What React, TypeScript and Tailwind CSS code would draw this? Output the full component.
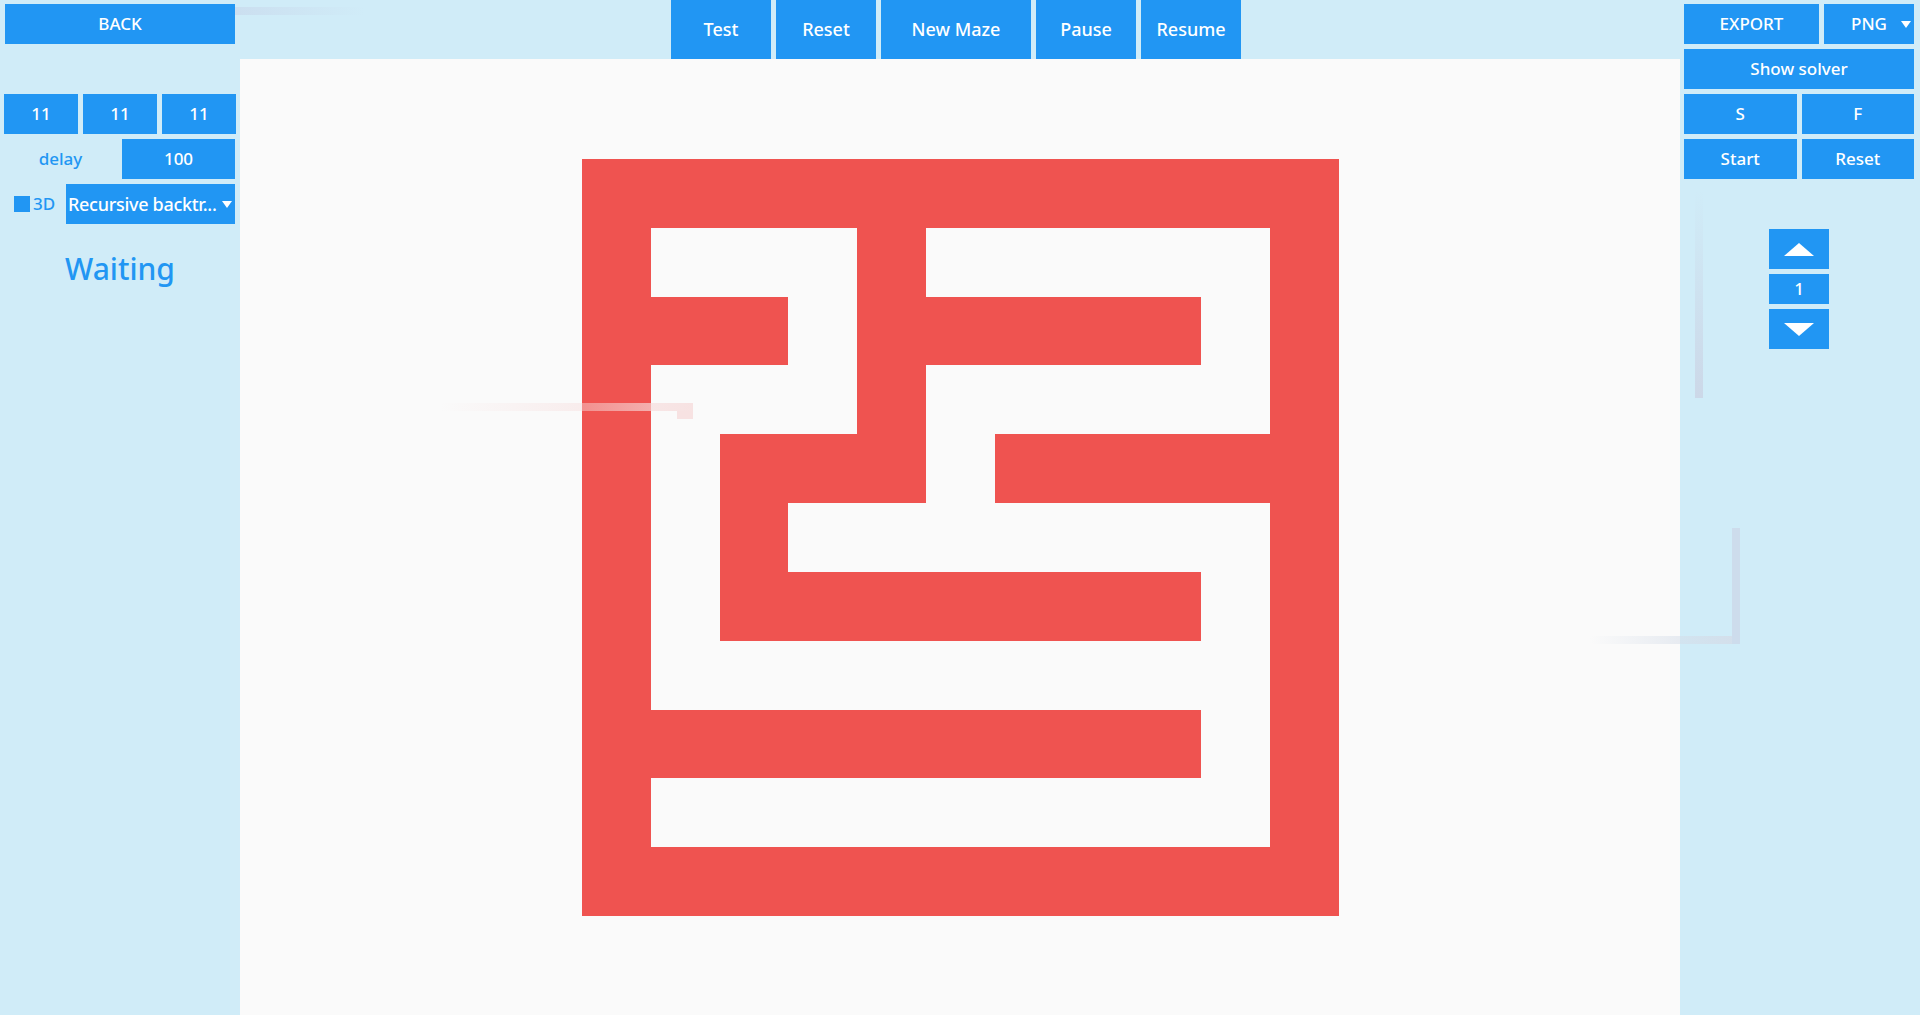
import React from 'react';

const MAZE = [
  'RRRRRRRRRRR',
  'RWWWRWWWWWR',
  'RRRWRRRRRWR',
  'RWWWRWWWWWR',
  'RWRRRWRRRRR',
  'RWRWWWWWWWR',
  'RWRRRRRRRWR',
  'RWWWWWWWWWR',
  'RRRRRRRRRWR',
  'RWWWWWWWWWR',
  'RRRRRRRRRRR',
];

const font = { fontFamily: '"Noto Sans", "Open Sans", sans-serif' };

function Btn({ children, className = '' }: { children: React.ReactNode; className?: string }) {
  return (
    <div className={`flex items-center justify-center bg-[#2196F3] text-white ${className}`}>
      {children}
    </div>
  );
}

function Caret() {
  return (
    <svg width="10" height="7" viewBox="0 0 10 7" className="shrink-0">
      <path d="M0 0 H10 L5 7 Z" fill="#fff" />
    </svg>
  );
}

function Maze() {
  return (
    <svg width="757" height="757" viewBox="0 0 11 11" shapeRendering="crispEdges">
      {MAZE.map((row, y) =>
        row.split('').map((c, x) =>
          c === 'R' ? <rect key={`${x}-${y}`} x={x} y={y} width="1" height="1" fill="#EF5350" /> : null
        )
      )}
    </svg>
  );
}

export default function App() {
  return (
    <div className="relative flex h-[1015px] w-[1920px] overflow-hidden bg-[#D0ECF8] text-[17px] font-medium" style={font}>
      {/* left panel */}
      <div className="flex w-[240px] shrink-0 flex-col">
        <Btn className="ml-[5px] mt-[4px] h-[40px] w-[230px]">BACK</Btn>
        <div className="ml-[4px] mt-[50px] grid w-[232px] grid-cols-3 gap-[5px]">
          <Btn className="h-[40px]">11</Btn>
          <Btn className="h-[40px]">11</Btn>
          <Btn className="h-[40px]">11</Btn>
        </div>
        <div className="ml-[4px] mt-[5px] flex h-[40px] w-[231px] gap-[5px]">
          <div className="flex w-[113px] items-center justify-center text-[#2196F3]">delay</div>
          <Btn className="flex-1">100</Btn>
        </div>
        <div className="ml-[4px] mt-[5px] flex h-[40px] w-[231px] items-center">
          <div className="ml-[10px] h-[16px] w-[16px] bg-[#2196F3]" />
          <span className="ml-[3px] w-[33px] text-[#2196F3]">3D</span>
          <div className="flex h-full flex-1 items-center justify-between overflow-hidden bg-[#2196F3] pl-[2px] pr-[3px] text-[18px] text-white">
            <span className="whitespace-nowrap tracking-[-0.3px]">Recursive backtr...</span>
            <Caret />
          </div>
        </div>
        <div className="mt-[22px] text-center text-[30px] text-[#2196F3]">Waiting</div>
      </div>

      {/* center */}
      <div className="flex flex-1 flex-col">
        <div className="flex h-[59px] shrink-0 gap-[5px] pl-[431px] text-[18px]">
          <Btn className="w-[100px]">Test</Btn>
          <Btn className="w-[100px]">Reset</Btn>
          <Btn className="w-[150px]">New Maze</Btn>
          <Btn className="w-[100px]">Pause</Btn>
          <Btn className="w-[100px]">Resume</Btn>
        </div>
        <div className="flex flex-1 items-center justify-center bg-[#FAFAFA]">
          <Maze />
        </div>
      </div>

      {/* right panel */}
      <div className="flex w-[240px] shrink-0 flex-col pl-[4px] pr-[6px] pt-[4px]">
        <div className="flex h-[40px] gap-[5px]">
          <Btn className="w-[135px]">EXPORT</Btn>
          <div className="relative flex flex-1 items-center justify-center bg-[#2196F3] text-white">
            PNG
            <div className="absolute right-[3px] top-[17px]">
              <Caret />
            </div>
          </div>
        </div>
        <Btn className="mt-[5px] h-[40px]">Show solver</Btn>
        <div className="mt-[5px] grid h-[40px] grid-cols-2 gap-[5px]">
          <Btn>S</Btn>
          <Btn>F</Btn>
        </div>
        <div className="mt-[5px] grid h-[40px] grid-cols-2 gap-[5px]">
          <Btn>Start</Btn>
          <Btn>Reset</Btn>
        </div>
        <div className="mt-[50px] flex flex-col items-center gap-[5px]">
          <Btn className="h-[40px] w-[60px]">
            <svg width="30" height="13" viewBox="0 0 30 13">
              <path d="M0 13 L15 0 L30 13 Z" fill="#fff" />
            </svg>
          </Btn>
          <Btn className="h-[30px] w-[60px] text-[17px]">1</Btn>
          <Btn className="h-[40px] w-[60px]">
            <svg width="30" height="13" viewBox="0 0 30 13">
              <path d="M0 0 L30 0 L15 13 Z" fill="#fff" />
            </svg>
          </Btn>
        </div>
      </div>

      {/* faint motion trails */}
      <div className="pointer-events-none absolute left-[235px] top-[7px] h-[8px] w-[130px] bg-gradient-to-r from-[#C9D9EC] to-transparent opacity-70" />
      <div className="pointer-events-none absolute left-[440px] top-[403px] h-[8px] w-[253px] bg-gradient-to-r from-transparent to-[#F6DCDC] opacity-80" />
      <div className="pointer-events-none absolute left-[677px] top-[411px] h-[8px] w-[16px] bg-[#F6DCDC] opacity-80" />
      <div className="pointer-events-none absolute left-[1695px] top-[190px] h-[208px] w-[8px] bg-gradient-to-b from-transparent to-[#CCD8E8]" />
      <div className="pointer-events-none absolute left-[1732px] top-[528px] h-[116px] w-[8px] bg-[#CCD8E8] opacity-80" />
      <div className="pointer-events-none absolute left-[1590px] top-[636px] h-[8px] w-[142px] bg-gradient-to-r from-transparent to-[#D4DCE8] opacity-80" />
    </div>
  );
}
